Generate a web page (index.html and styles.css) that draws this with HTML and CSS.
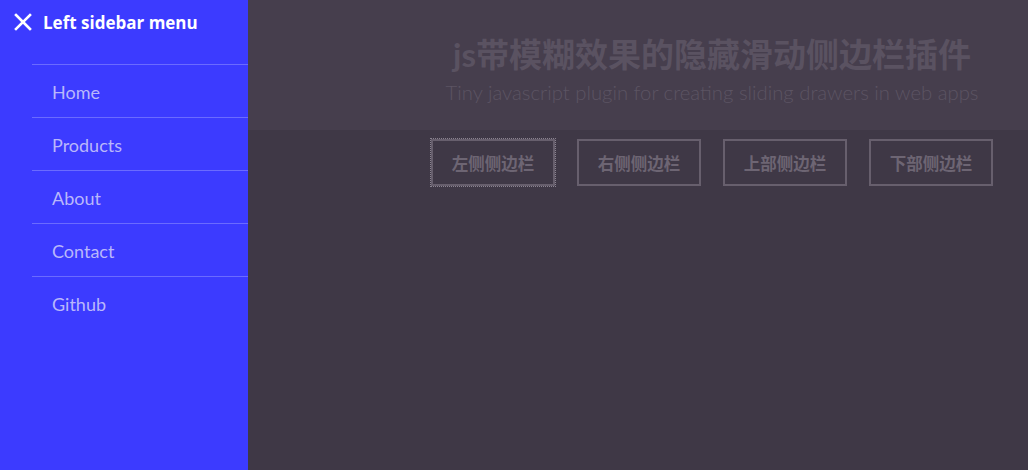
FILE: index.html
```html
<!DOCTYPE html>
<html lang="zh">
<head>
<meta charset="utf-8">
<title>js带模糊效果的隐藏滑动侧边栏插件</title>
<link rel="stylesheet" href="styles.css">
</head>
<body>
<div class="page">
  <aside class="sidebar">
    <div class="sb-head">
      <svg class="close" width="18" height="18" viewBox="0 0 18 18"><path d="M2 2 L16 16 M16 2 L2 16" stroke="#fff" stroke-width="2.6" stroke-linecap="square"/></svg>
      <span class="sb-title">Left sidebar menu</span>
    </div>
    <ul class="menu">
      <li>Home</li>
      <li>Products</li>
      <li>About</li>
      <li>Contact</li>
      <li>Github</li>
    </ul>
  </aside>
  <main class="main">
    <header class="hero">
      <div class="hero-inner">
        <h1 class="title">js带模糊效果的隐藏滑动侧边栏插件</h1>
        <p class="subtitle">Tiny javascript plugin for creating sliding drawers in web apps</p>
      </div>
    </header>
    <div class="buttons">
      <button class="btn focused">左侧侧边栏</button>
      <button class="btn">右侧侧边栏</button>
      <button class="btn">上部侧边栏</button>
      <button class="btn">下部侧边栏</button>
    </div>
  </main>
</div>
</body>
</html>
```
FILE: styles.css
```css
html, body { margin: 0; padding: 0; }
body {
  background: #3f3846;
  font-family: "Lato", "Noto Sans CJK SC", sans-serif;
  width: 1028px; height: 470px; overflow: hidden;
}
.page { display: flex; height: 470px; }
.sidebar {
  width: 248px; flex: none;
  background: #3c3bff;
  height: 470px;
}
.sb-head {
  display: flex; align-items: center;
  height: 44px;
  padding-left: 14px;
  gap: 11px;
}
.close { flex: none; }
.sb-title { color: #fff; font-family: "Open Sans", sans-serif; font-weight: 700; font-size: 17px; }
.menu { list-style: none; margin: 20px 0 0 32px; padding: 0; }
.menu li {
  border-top: 1px solid #6b6bff;
  height: 52px; line-height: 54px;
  padding-left: 20px;
  color: #b9b7fb;
  font-size: 18px;
}
.main { flex: 1; display: flex; flex-direction: column; }
.hero { background: #463e4d; height: 130px; }
.hero-inner { margin-left: 148px; text-align: center; padding-top: 32px; }
.title {
  margin: 0; font-size: 33px; font-weight: 700; color: #5a5261;
  line-height: 44px;
}
.subtitle {
  margin: 3px 0 0; font-size: 20.3px; font-weight: 300; color: #5c5463;
  line-height: 26px;
}
.buttons {
  margin-left: 148px;
  display: flex; justify-content: center; gap: 22px;
  padding-top: 9px;
}
.btn {
  width: 124px; height: 47px;
  background: transparent;
  border: 2px solid #675f6d;
  color: #6d6573;
  font-family: "Noto Sans CJK SC", sans-serif;
  font-weight: 700; font-size: 16.5px;
  padding: 0;
}
.btn.focused { outline: 1px dotted #8a8390; outline-offset: 0; }
```
